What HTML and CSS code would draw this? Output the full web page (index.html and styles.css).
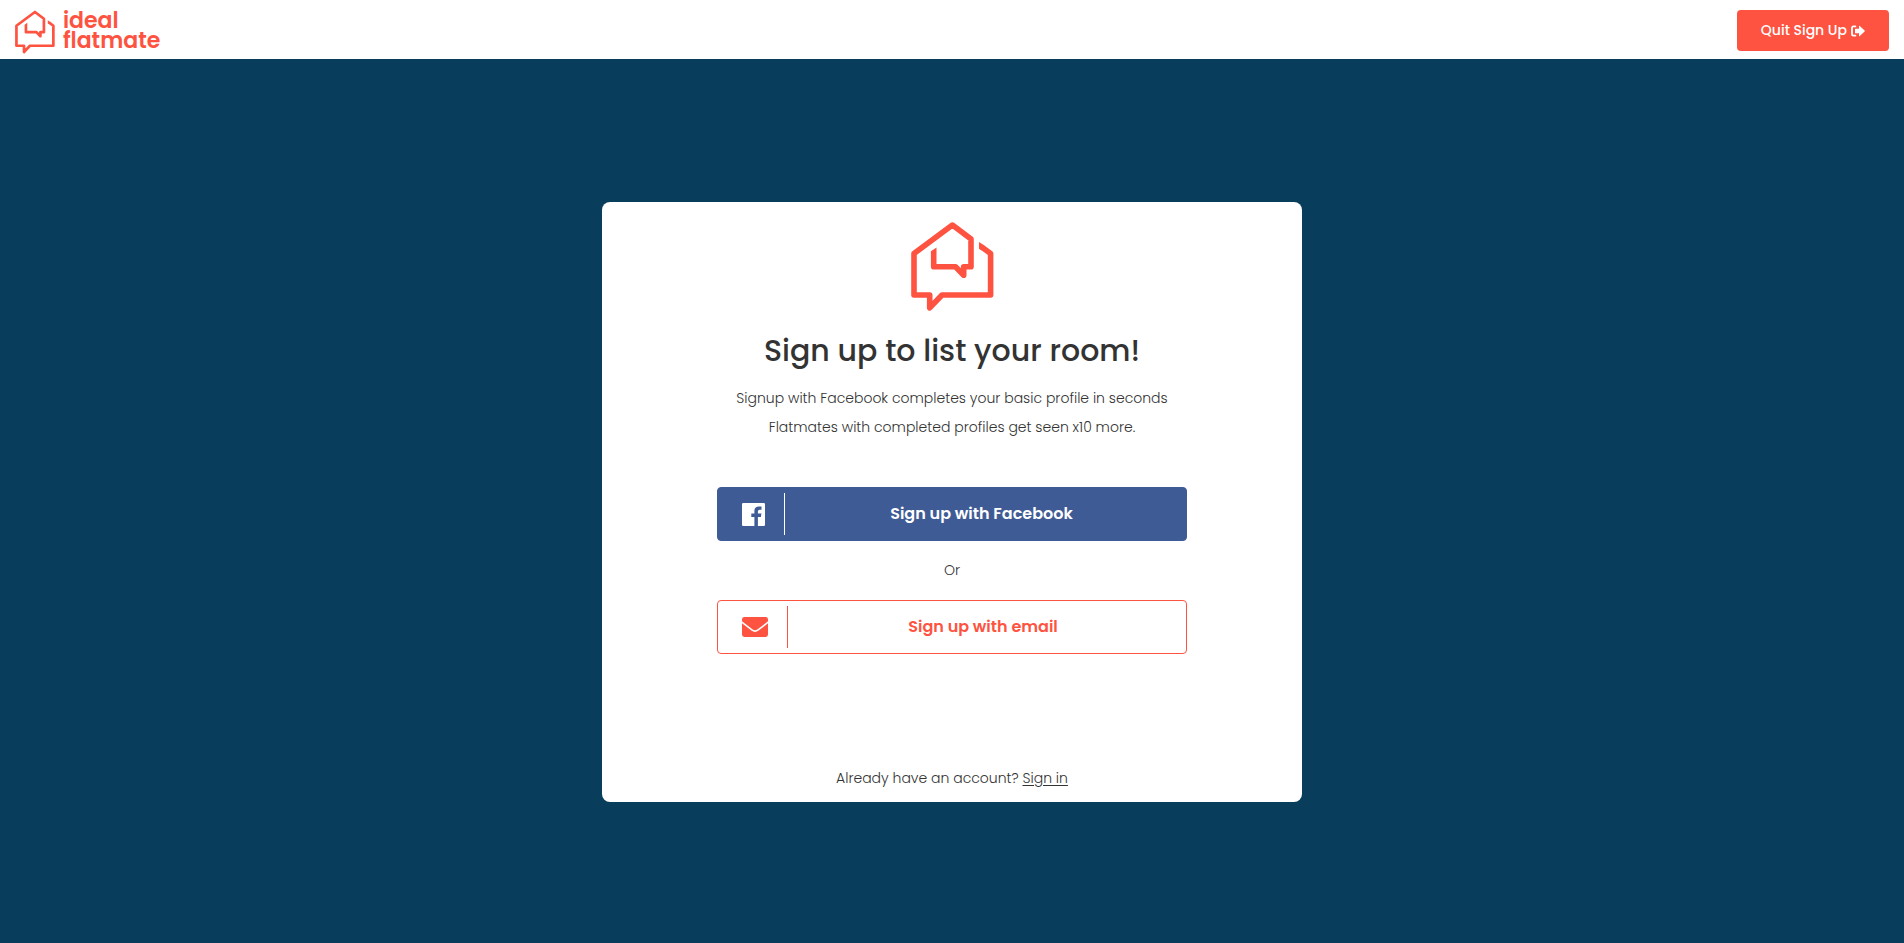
FILE: index.html
```html
<!DOCTYPE html>
<html lang="en">
<head>
<meta charset="utf-8">
<meta name="viewport" content="width=device-width, initial-scale=1">
<title>Sign up | ideal flatmate</title>
<link rel="stylesheet" href="styles.css">
</head>
<body>
<svg class="sprite" aria-hidden="true">
  <symbol id="house" viewBox="30 22 83 89">
    <path fill="none" stroke="currentColor" stroke-width="5.6" stroke-linejoin="round" d="M101 47.2 109.6 53.5V95H61L48.7 107.9V95H33V53.5L71.4 25 90 39V66.8H82.7V75.3L74.5 66.8H52.7V52"/>
    <path fill="currentColor" d="M98 41.9 103.5 45.6 100.5 50.6 98 48.8ZM49.9 52.2V51.2L55.5 47.4V52.2Z"/>
  </symbol>
</svg>
<header class="topbar">
  <a class="brand" href="#">
    <svg class="brand-mark" aria-hidden="true"><use href="#house"/></svg>
    <span class="brand-name">ideal<br>flatmate</span>
  </a>
  <button class="quit" type="button">Quit Sign Up
    <svg class="quit-icon" viewBox="0 0 14 12" aria-hidden="true"><path fill="none" stroke="currentColor" stroke-width="1.8" stroke-linecap="round" stroke-linejoin="round" d="M4.4 1.4H2.6Q1 1.4 1 3V9Q1 10.6 2.6 10.6H4.4"/><path fill="currentColor" d="M4 4.3Q4 3.7 4.6 3.7H8V1.3Q8 .4 8.8 .9L13.6 5.5Q14 6 13.6 6.5L8.8 11.1Q8 11.6 8 10.7V8.3H4.6Q4 8.3 4 7.7Z"/></svg>
  </button>
</header>
<main class="stage">
  <section class="card">
    <svg class="card-mark" aria-hidden="true"><use href="#house"/></svg>
    <h1 class="title">Sign up to list your room!</h1>
    <p class="lead">Signup with Facebook completes your basic profile in seconds<br>Flatmates with completed profiles get seen x10 more.</p>
    <div class="options">
      <button class="option option-facebook" type="button">
        <svg class="icon-facebook" viewBox="0 0 23 23" aria-hidden="true"><path fill="currentColor" d="M1.2 0H21.8Q23 0 23 1.2V21.8Q23 23 21.8 23H15.9V14.1H18.9L19.4 10.6H15.9V8.4Q15.9 6.7 17.6 6.7H19.5V3.6Q18.4 3.4 16.9 3.4Q12.4 3.4 12.4 7.9V10.6H9.3V14.1H12.4V23H1.2Q0 23 0 21.8V1.2Q0 0 1.2 0Z"/></svg>
        <span class="option-label">Sign up with Facebook</span>
      </button>
      <p class="or">Or</p>
      <button class="option option-email" type="button">
        <svg class="icon-email" viewBox="0 0 26 20" aria-hidden="true"><path fill="currentColor" d="M2.4 0H23.6Q26 0 26 2.4V4.3L15.6 12.3Q13 14.2 10.4 12.3L0 4.3V2.4Q0 0 2.4 0ZM0 6.3 9.4 13.6Q13 16.2 16.6 13.6L26 6.3V17.6Q26 20 23.6 20H2.4Q0 20 0 17.6Z"/></svg>
        <span class="option-label">Sign up with email</span>
      </button>
    </div>
    <p class="signin">Already have an account? <a class="signin-link" href="#">Sign in</a></p>
  </section>
</main>
</body>
</html>
```
FILE: styles.css
```css
* { box-sizing: border-box; }

body {
  margin: 0;
  min-height: 100vh;
  display: flex;
  flex-direction: column;
  background: #083d5b;
  color: #333;
  font-family: Poppins, Inter, sans-serif;
  font-size: 14px;
  font-weight: 300;
}

h1, p { margin: 0; }

button {
  font-family: inherit;
  cursor: pointer;
}

.sprite {
  position: absolute;
  width: 0;
  height: 0;
}

.topbar {
  display: flex;
  align-items: center;
  justify-content: space-between;
  min-height: 59px;
  padding: 0 15px;
  background: #fff;
}

.brand {
  display: flex;
  align-items: center;
  gap: 8px;
  padding-top: 4px;
  color: #fe5341;
  text-decoration: none;
}

.brand-mark {
  width: 40px;
  height: 44px;
}

.brand-name {
  padding-bottom: 2px;
  font-size: 22px;
  font-weight: 600;
  line-height: 20px;
}

.quit {
  display: flex;
  align-items: center;
  gap: 4px;
  height: 41px;
  margin-top: 2px;
  padding: 0 24px;
  border: 0;
  border-radius: 4px;
  background: #fe5341;
  color: #fff;
  font-size: 14px;
  font-weight: 500;
}

.quit-icon {
  width: 14px;
  height: 12px;
}

.stage {
  flex: 1;
  display: flex;
  align-items: center;
  justify-content: center;
  padding: 18px 16px 16px;
}

.card {
  display: flex;
  flex-direction: column;
  align-items: center;
  width: 100%;
  max-width: 700px;
  min-height: 600px;
  padding: 20px 16px 12px;
  border-radius: 8px;
  background: #fff;
  text-align: center;
}

.card-mark {
  width: 83px;
  height: 89px;
  color: #fe5341;
}

.title {
  margin-top: 20px;
  font-size: 30px;
  font-weight: 500;
  line-height: 40px;
}

.lead {
  margin-top: 13px;
  line-height: 29px;
}

.options {
  width: 100%;
  max-width: 470px;
  margin-top: 45px;
}

.option {
  display: flex;
  align-items: center;
  width: 100%;
  height: 54px;
  padding: 5px 8px 5px 24px;
  border: 1px solid;
  border-radius: 4px;
  font-size: 16px;
  font-weight: 600;
}

.option-facebook {
  border-color: #3f5b95;
  background: #3f5b95;
  color: #fff;
}

.option-email {
  border-color: #fe5341;
  background: #fff;
  color: #fe5341;
}

.icon-facebook {
  width: 23px;
  height: 23px;
}

.icon-email {
  width: 26px;
  height: 20px;
}

.option-label {
  flex: 1;
  margin-left: 19px;
  border-left: 1px solid;
  line-height: 42px;
}

.or {
  line-height: 59px;
}

.signin {
  margin-top: auto;
  line-height: 24px;
}

.signin-link {
  color: inherit;
  text-underline-offset: 2px;
}
```
